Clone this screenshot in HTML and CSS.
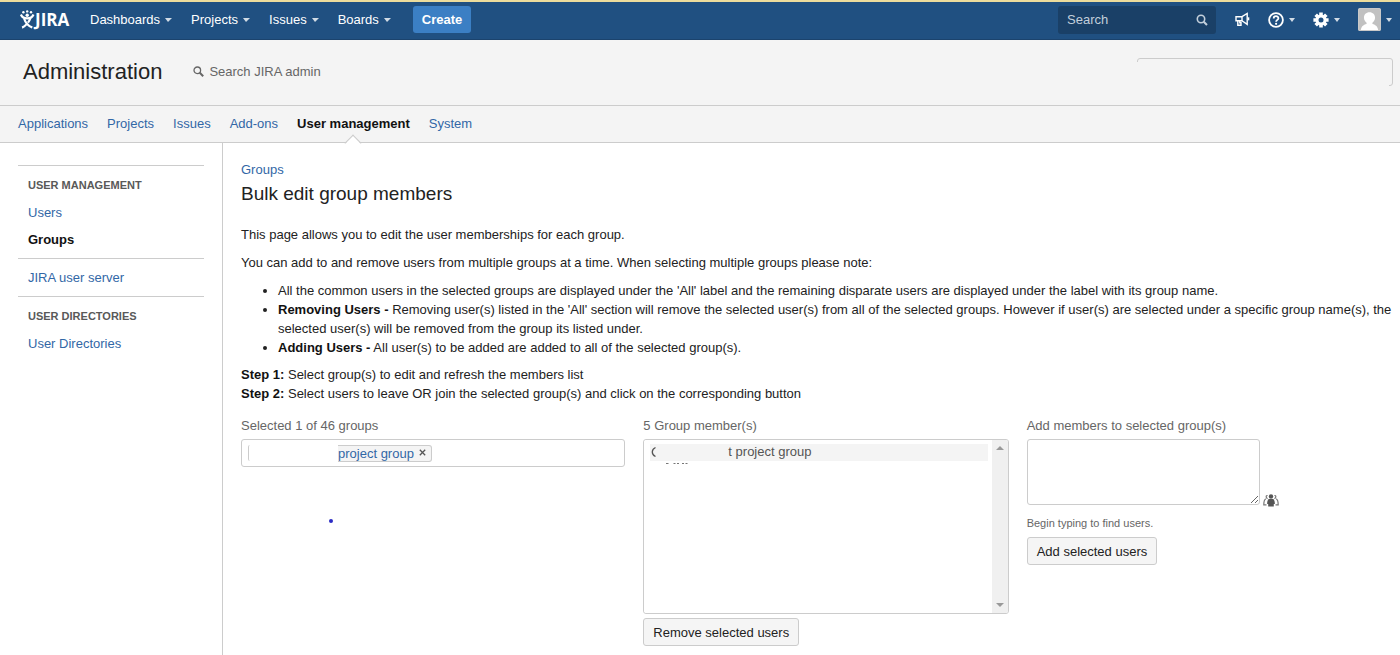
FILE: index.html
```html
<!DOCTYPE html>
<html lang="en">
<head>
<meta charset="utf-8">
<title>Bulk edit group members - JIRA</title>
<link rel="stylesheet" href="styles.css">
</head>
<body>
<header class="topbar">
  <a class="logo" href="#">
    <svg width="15" height="20" viewBox="0 0 15 20" aria-hidden="true"><g fill="#fff"><circle cx="3.400" cy="2.200" r="1.200"/><circle cx="7.200" cy="1.400" r="1.200"/><circle cx="11" cy="2.200" r="1.200"/><circle cx="7.200" cy="5.200" r="1.700"/></g><g fill="none" stroke="#fff" stroke-width="2.200"><path d="M.9 4.500C2.200 7.600 4.500 8.400 7.200 8.400S12.200 7.600 13.500 4.500"/><path d="M4 8.200C5 11.500 7.500 15.500 12.300 17.600M10.400 8.200C9.800 10 9 11.300 8 12.600M6.400 14.400C5.200 15.800 3.800 17 2.100 17.600" /></g></svg>
    <span>JIRA</span>
  </a>
  <nav class="menu">
    <a class="has-caret" href="#">Dashboards</a>
    <a class="has-caret" href="#">Projects</a>
    <a class="has-caret" href="#">Issues</a>
    <a class="has-caret" href="#">Boards</a>
  </nav>
  <button class="create" type="button">Create</button>
  <div class="tools">
    <div class="quick-search">
      <input type="text" placeholder="Search" aria-label="Search">
      <svg width="12" height="12" viewBox="0 0 12 12" fill="none" stroke="#c3cfdb" aria-hidden="true"><circle cx="5" cy="5" r="3.700" stroke-width="1.600"/><path d="M7.700 7.700L11 11" stroke-width="2"/></svg>
    </div>
    <a class="tool" href="#" aria-label="Feedback"><svg width="15" height="15" viewBox="0 0 15 15" fill="none" stroke="#fff" stroke-width="1.400"><path d="M1 4.700H7V8.700H1Z"/><path d="M7 4.700L12.200 1.400V12.400L7 8.700"/><path d="M2.800 8.700V13.300H6V10.800H4.800V8.700"/><path d="M13.500 5.300V8.300" stroke-width="1.600"/></svg></a>
    <a class="tool has-caret help" href="#" aria-label="Help"><svg width="16" height="16" viewBox="0 0 16 16" fill="none" stroke="#fff"><circle cx="8" cy="8" r="6.900" stroke-width="1.800"/><path d="M5.700 6.500C5.700 3.400 10.400 3.500 10.400 6.200C10.400 7.900 8.100 7.900 8.100 9.800" stroke-width="1.800"/><circle cx="8.100" cy="11.800" r="1.100" fill="#fff" stroke="none"/></svg></a>
    <a class="tool has-caret gear" href="#" aria-label="Administration"><svg width="16" height="16" viewBox="0 0 16 16"><g stroke="#fff" stroke-width="3.600"><path d="M8 .4V15.600M.4 8H15.600M2.700 2.700L13.300 13.300M13.300 2.700L2.700 13.300"/></g><circle cx="8" cy="8" r="5.500" fill="#fff"/><circle cx="8" cy="8" r="2.500" fill="#205081"/></svg></a>
    <a class="tool has-caret profile" href="#" aria-label="User profile"><svg width="23" height="23" viewBox="0 0 22 22"><rect width="22" height="22" rx="2" fill="#c1c1c1"/><path d="M11 4C14.300 4 16.300 6.200 16.300 9C16.300 11.300 15.200 13 13.800 14V15.200C17 16 19 17.500 19.500 22H2.500C3 17.500 5 16 8.200 15.200V14C6.800 13 5.700 11.300 5.700 9C5.700 6.200 7.700 4 11 4Z" fill="#fff"/><rect x=".5" y=".5" width="21" height="21" rx="2" fill="none" stroke="#c9c9c9"/></svg></a>
  </div>
</header>

<section class="admin-head">
  <h1>Administration</h1>
  <a class="admin-search" href="#">
    <svg width="11" height="11" viewBox="0 0 11 11" fill="none" stroke="#666" aria-hidden="true"><circle cx="4.300" cy="4.300" r="3.300" stroke-width="1.300"/><path d="M6.800 6.800L10.200 10.200" stroke-width="2"/></svg>
    Search JIRA admin
  </a>
  <div class="head-panel"></div>
</section>

<nav class="tabs">
  <a href="#">Applications</a>
  <a href="#">Projects</a>
  <a href="#">Issues</a>
  <a href="#">Add-ons</a>
  <a class="current" href="#">User management</a>
  <a href="#">System</a>
</nav>

<div class="page">
  <aside class="sidebar">
    <section>
      <h2>USER MANAGEMENT</h2>
      <a href="#">Users</a>
      <a class="current" href="#">Groups</a>
    </section>
    <section>
      <a href="#">JIRA user server</a>
    </section>
    <section>
      <h2>USER DIRECTORIES</h2>
      <a href="#">User Directories</a>
    </section>
  </aside>

  <main class="content">
    <a class="crumb" href="#">Groups</a>
    <h2 class="title">Bulk edit group members</h2>
    <p>This page allows you to edit the user memberships for each group.</p>
    <p>You can add to and remove users from multiple groups at a time. When selecting multiple groups please note:</p>
    <ul class="notes">
      <li>All the common users in the selected groups are displayed under the 'All' label and the remaining disparate users are displayed under the label with its group name.</li>
      <li><b>Removing Users -</b> Removing user(s) listed in the 'All' section will remove the selected user(s) from all of the selected groups. However if user(s) are selected under a specific group name(s), the selected user(s) will be removed from the group its listed under.</li>
      <li><b>Adding Users -</b> All user(s) to be added are added to all of the selected group(s).</li>
    </ul>
    <div class="steps">
      <div><b>Step 1:</b> Select group(s) to edit and refresh the members list</div>
      <div><b>Step 2:</b> Select users to leave OR join the selected group(s) and click on the corresponding button</div>
    </div>

    <form class="columns">
      <div class="col">
        <label for="groups">Selected 1 of 46 groups</label>
        <div class="picker">
          <span class="tag-start"></span>
          <span class="tag"><a href="#">project group</a><button type="button" aria-label="Remove group"><svg width="7" height="7" viewBox="0 0 7 7"><path d="M.8 .8L6.200 6.200M6.200 .8L.8 6.200" stroke="#555" stroke-width="1.300"/></svg></button></span>
          <input id="groups" type="text">
        </div>
        <span class="dot"></span>
      </div>

      <div class="col">
        <label for="members">5 Group member(s)</label>
        <div class="listbox">
          <select id="members" multiple>
            <option>t project group</option>
          </select>
          <div class="scrollbar"><span class="up"></span><span class="down"></span></div>
          <svg class="remnants" width="40" height="22" viewBox="0 0 40 22" aria-hidden="true"><path d="M5.500 4.500C1.200 6.500 1.200 11.500 5.500 13.500" fill="none" stroke="#555" stroke-width="1.300"/><path d="M16 20.500H18.500M23.500 20.500H25.500M27 20.500H29M32 20.500H34M35.500 20.500H37.500" stroke="#777"/></svg>
        </div>
        <button class="button" type="button">Remove selected users</button>
      </div>

      <div class="col">
        <label for="add">Add members to selected group(s)</label>
        <div class="add-row">
          <textarea id="add"></textarea>
          <a href="#" aria-label="Select users"><svg width="16" height="13" viewBox="0 0 16 13"><g fill="none" stroke="#777" stroke-width="1.200"><path d="M4.600 4.600C2.600 4 2.800 1.200 4.600 1.500M2.800 4.800C1 5.800 .8 7.500 .8 10.800H3.500"/><path d="M11.400 4.600C13.400 4 13.200 1.200 11.400 1.500M13.200 4.800C15 5.800 15.200 7.500 15.200 10.800H12.500"/></g><circle cx="8" cy="2.500" r="2.200" fill="#555"/><path d="M5.600 5H10.400C11.600 6.500 12 8.500 11.800 10H10.800V12.500H5.200V10H4.200C4 8.500 4.400 6.500 5.600 5Z" fill="#555"/></svg></a>
        </div>
        <div class="hint">Begin typing to find users.</div>
        <button class="button" type="button">Add selected users</button>
      </div>
    </form>
  </main>
</div>
</body>
</html>
```
FILE: styles.css
```css
* { box-sizing: border-box; }

body {
  margin: 0;
  min-height: 100vh;
  display: flex;
  flex-direction: column;
  background: #fff;
  color: #222;
  font: 13px/19px "Liberation Sans", Arial, sans-serif;
}

a { color: #3267a6; text-decoration: none; }
h1, h2, p { margin: 0; font-weight: 400; }
svg { display: block; flex: none; }
button, input, textarea, select { font: inherit; }
b { color: #111; }

/* Top bar */
.topbar {
  display: flex;
  align-items: center;
  height: 40px;
  padding: 0 8px 2px 20px;
  border-top: 2px solid #ecdc9c;
  border-bottom: 1px solid #1b436d;
  background: #205081;
}
.logo {
  display: flex;
  align-items: center;
  width: 50px;
  margin-right: 20px;
  color: #fff;
  font: 700 17px/20px "Open Sans", sans-serif;
}
.menu { display: flex; gap: 19px; }
.menu a { color: #fff; }
.has-caret { display: flex; align-items: center; gap: 5px; }
.has-caret::after {
  content: "";
  border: 3px solid transparent;
  border-top: 4px solid #d2dce6;
  border-bottom: 0;
}
.menu .has-caret::after { border-width: 4px 4px 0 3px; }
.create {
  height: 27px;
  margin-left: 22px;
  padding: 0 9px;
  border: 0;
  border-radius: 3px;
  background: #3b7fc4;
  color: #fff;
  font-weight: 700;
}
.tools { display: flex; align-items: center; margin-left: auto; }
.quick-search {
  display: flex;
  align-items: center;
  width: 158px;
  height: 28px;
  margin-right: 19px;
  padding: 0 8px;
  border-radius: 3px;
  background: #1a4067;
}
.quick-search input {
  flex: 1;
  min-width: 0;
  padding: 0 1px;
  border: 0;
  outline: 0;
  background: none;
  color: #fff;
}
.quick-search input::placeholder { color: #c3cfdb; }
.help, .gear, .profile { margin-left: 18px; }

/* Administration header */
.admin-head {
  display: flex;
  align-items: center;
  height: 66px;
  padding: 0 7px 2px 23px;
  border-bottom: 1px solid #ccc;
  background: #f4f4f4;
}
.admin-head h1 { font-size: 22px; line-height: 30px; }
.admin-search {
  display: flex;
  align-items: center;
  gap: 5px;
  margin-left: 31px;
  color: #666;
}
.head-panel {
  position: relative;
  width: 256px;
  height: 28px;
  margin-left: auto;
  border: 1px solid #ccc;
  border-radius: 3px;
}
.head-panel::after {
  content: "";
  position: absolute;
  inset: 3px 3px -1px -1px;
  background: #f4f4f4;
}

/* Section tabs */
.tabs {
  display: flex;
  gap: 19px;
  height: 37px;
  padding: 8px 18px 0;
  border-bottom: 1px solid #ccc;
  background: #f4f4f4;
}
.tabs .current { position: relative; color: #111; font-weight: 700; }
.tabs .current::after {
  content: "";
  position: absolute;
  left: 50%;
  bottom: -7px;
  width: 11px;
  height: 11px;
  margin-left: -6px;
  border: 1px solid #ccc;
  border-width: 1px 0 0 1px;
  background: linear-gradient(135deg, #fff 60%, transparent 60%);
  transform: rotate(45deg);
}

/* Body */
.page { display: flex; flex: 1; }
.sidebar {
  flex: none;
  width: 223px;
  padding: 22px 18px 0;
  border-right: 1px solid #ccc;
}
.sidebar section { padding: 9px 10px; border-top: 1px solid #ccc; }
.sidebar h2 {
  padding-top: 1px;
  margin-bottom: 8px;
  color: #595959;
  font-size: 11px;
  font-weight: 700;
}
.sidebar a { display: block; }
.sidebar a + a { margin-top: 8px; }
.sidebar .current { color: #111; font-weight: 700; }

.content { flex: 1; min-width: 0; padding: 18px 7px 8px 18px; }
.crumb { display: block; line-height: 18px; }
.title { margin: 3px 0 19px; font-size: 19px; line-height: 24px; }
.content p { margin-bottom: 9px; }
.notes { margin: 0 0 8px; padding-left: 37px; }

.columns {
  display: grid;
  grid-template-columns: 384fr 365fr 366fr;
  gap: 18px;
  margin-top: 13px;
}
.col { min-width: 0; }
.col label { display: block; margin-bottom: 4px; color: #666; }

.picker {
  display: flex;
  align-items: center;
  height: 28px;
  padding: 0 6px;
  border: 1px solid #ccc;
  border-radius: 3px;
}
.picker input { flex: 1; min-width: 0; border: 0; outline: 0; background: none; }
.tag-start {
  width: 2px;
  height: 16px;
  margin-right: 88px;
  border-left: 1px solid #ccc;
  border-radius: 2px 0 0 2px;
}
.tag {
  display: flex;
  align-items: center;
  height: 17px;
  padding-right: 5px;
  border: 1px solid #ccc;
  border-left: 0;
  border-radius: 0 3px 3px 0;
  background: #f4f4f4;
}
.tag button { margin-left: 5px; padding: 0 0 2px; border: 0; background: none; }
.dot {
  display: block;
  width: 4px;
  height: 4px;
  margin: 52px 0 0 88px;
  border-radius: 50%;
  background: #2b2bc4;
}

.listbox {
  position: relative;
  display: flex;
  height: 175px;
  margin-bottom: 4px;
  border: 1px solid #ccc;
  border-radius: 3px;
  overflow: hidden;
}
.listbox select {
  flex: 1;
  min-width: 0;
  padding: 4px 4px 3px 6px;
  border: 0;
  outline: 0;
  overflow: hidden;
  color: #555;
  background: #fff;
}
.listbox option {
  min-height: 17px;
  padding: 0 0 0 78px;
  line-height: 17px;
  background: #f4f4f4;
}
.scrollbar {
  display: flex;
  flex-direction: column;
  justify-content: space-between;
  align-items: center;
  width: 16px;
  padding: 6px 0;
  background: #f0f0f0;
}
.up, .down { border: 4px solid transparent; }
.up { border-top: 0; border-bottom-color: #999; }
.down { border-bottom: 0; border-top-color: #999; }
.remnants { position: absolute; left: 6px; top: 3px; }

.button {
  height: 28px;
  padding: 0 9px;
  border: 1px solid #ccc;
  border-radius: 3px;
  background: #f5f5f5;
  color: #222;
}
.add-row { display: flex; align-items: flex-end; gap: 3px; }
.add-row textarea {
  width: 233px;
  height: 66px;
  border: 1px solid #ccc;
  border-radius: 3px;
  outline: 0;
  resize: both;
}
.add-row a { margin-bottom: -2px; }
.hint { margin: 9px 0 4px; color: #666; font-size: 11px; }
```
